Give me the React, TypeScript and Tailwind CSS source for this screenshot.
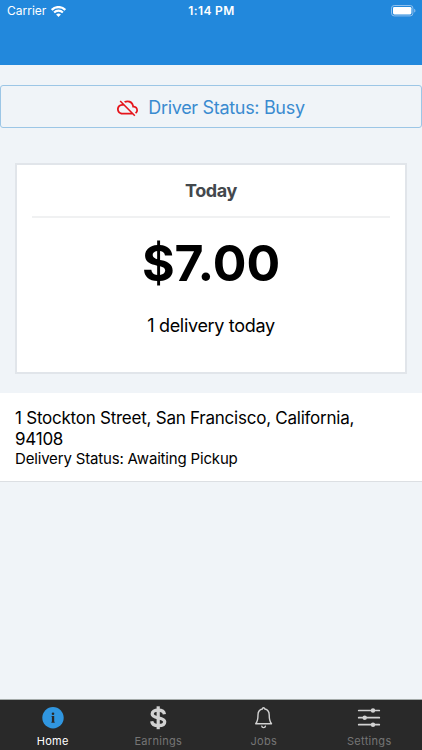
import type { ReactNode } from "react";
import { MdCloudOff } from "react-icons/md";

function WifiIcon() {
  return (
    <svg className="w-[15px] h-[11px]" viewBox="0 0 15 11" fill="none">
      <path d="M0.7 3.9a9.6 9.6 0 0 1 13.6 0" stroke="white" strokeWidth="2.3" />
      <path d="M3.1 6.5a6.2 6.2 0 0 1 8.8 0" stroke="white" strokeWidth="2.1" />
      <path d="M7.5 11L5.1 8.6a3.4 3.4 0 0 1 4.8 0z" fill="white" />
    </svg>
  );
}

function BatteryIcon() {
  return (
    <svg className="w-[25px] h-[12px]" viewBox="0 0 25 12" fill="none">
      <rect x="0.5" y="0.5" width="21.4" height="10.4" rx="2.7" stroke="#8fc0ee" />
      <rect x="2" y="2" width="18.4" height="7.4" rx="1.3" fill="white" />
      <path d="M23.2 3.8v3.8c.7-.3 1.2-1 1.2-1.9s-.5-1.6-1.2-1.9z" fill="#8fc0ee" />
    </svg>
  );
}

function InfoIcon() {
  return (
    <svg className="w-6 h-6" viewBox="0 0 24 24">
      <circle cx="12" cy="11.7" r="10.7" fill="#3096e0" />
      <circle cx="12" cy="7.7" r="1.3" fill="#292929" />
      <path d="M10.6 9.9h2.6v5.8h.5v1h-3.3v-1h.5v-4.8h-.3z" fill="#292929" />
    </svg>
  );
}

function DollarIcon() {
  return (
    <svg className="w-6 h-6" viewBox="0 0 24 24" fill="none" stroke="#d2d2d2">
      <path d="M12.2 .3v22.9" strokeWidth="3.2" />
      <path
        d="M18.4 8.2C18 5.3 15.7 4.2 12.2 4.2c-3.7 0-6 1.4-6 3.8 0 2.3 1.9 3 6 3.8 4.3.8 6.5 1.6 6.5 4 0 2.5-2.5 3.9-6.3 3.9-4 0-6.3-1.3-6.7-4.4"
        strokeWidth="3.3"
      />
    </svg>
  );
}

function BellIcon() {
  return (
    <svg
      className="w-6 h-6"
      viewBox="0 0 24 24"
      fill="none"
      stroke="#d2d2d2"
      strokeWidth="1.4"
      strokeLinecap="round"
      strokeLinejoin="round"
    >
      <path d="M10.4 3a1.2 1.2 0 0 1 2.4 0c2.9.6 4.4 2.7 4.4 5.8 0 5 .6 7 2.3 9H3.7c1.7-2 2.3-4 2.3-9 0-3.1 1.5-5.2 4.4-5.8z" />
      <path d="M9.8 20.1c.1 1 .8 1.5 1.8 1.5s1.7-.5 1.8-1.5" />
    </svg>
  );
}

function SlidersIcon() {
  return (
    <svg className="w-6 h-6" viewBox="0 0 24 24" stroke="#d2d2d2" fill="#d2d2d2">
      <path d="M1.7 4.5h20.6M1.7 11.7h20.6M1.7 18.7h20.6" strokeWidth="1.7" strokeLinecap="round" />
      <g stroke="none">
        <circle cx="16" cy="4.5" r="2.2" />
        <circle cx="7.7" cy="11.7" r="2.2" />
        <circle cx="16" cy="18.7" r="2.2" />
      </g>
    </svg>
  );
}

interface TabProps {
  label: string;
  icon: ReactNode;
  active?: boolean;
}

function Tab({ label, icon, active }: TabProps) {
  return (
    <button type="button" className="flex-1 flex flex-col items-center pt-[6px]">
      {icon}
      <span
        className={
          active
            ? "mt-[4px] text-[11px] leading-[14px] tracking-[0.3px] text-white"
            : "mt-[4px] text-[11px] leading-[14px] tracking-[0.3px] text-[#757575]"
        }
      >
        {label}
      </span>
    </button>
  );
}

export default function App() {
  return (
    <div className="h-[750px] w-[422px] flex flex-col overflow-hidden bg-[#f0f4f8] font-['Inter',sans-serif] text-black">
      <header className="h-[65px] shrink-0 bg-[#2288dc] text-white">
        <div className="grid grid-cols-3 items-center h-[22px] pl-[7px] pr-[6px]">
          <div className="flex items-center gap-[5px]">
            <span className="text-[12px] leading-[22px]">Carrier</span>
            <WifiIcon />
          </div>
          <span className="text-center text-[12px] leading-[22px] tracking-[0.35px] font-semibold">1:14 PM</span>
          <div className="flex justify-end">
            <BatteryIcon />
          </div>
        </div>
      </header>

      <button
        type="button"
        className="mt-[20px] h-[43px] shrink-0 flex items-center justify-center gap-[10px] rounded-[3px] border border-[#9cc6e6] pt-[2px] text-[#3a8bd0]"
      >
        <MdCloudOff className="w-[21px] h-[21px] text-[#e5141b]" />
        <span className="text-[18px] leading-[22px] tracking-[-0.32px]">Driver Status: Busy</span>
      </button>

      <section className="mt-[35px] mx-[15px] h-[211px] shrink-0 border-2 border-[#e1e5ea] bg-white px-[15px] text-center">
        <h2 className="h-[53px] border-b-2 border-[#f0f1f2] pt-[15px] text-[18px] leading-[22px] tracking-[-0.35px] font-bold text-[#43484d]">
          Today
        </h2>
        <p className="mt-[15px] text-[50px] leading-[60px] font-bold">$7.00</p>
        <p className="mt-[22px] text-[18px] leading-[22px] tracking-[-0.32px]">1 delivery today</p>
      </section>

      <section className="mt-[19px] h-[89px] shrink-0 border-b border-[#dcdfe3] bg-white pl-[15px] pt-[15px] pr-[40px]">
        <p className="text-[17px] leading-[21px] tracking-[-0.24px]">
          1 Stockton Street, San Francisco, California, 94108
        </p>
        <p className="text-[15px] leading-[18px] tracking-[-0.17px]">Delivery Status: Awaiting Pickup</p>
      </section>

      <nav className="mt-auto h-[51px] shrink-0 flex border-t border-[#a4aaa9] bg-[#292929]">
        <Tab label="Home" icon={<InfoIcon />} active />
        <Tab label="Earnings" icon={<DollarIcon />} />
        <Tab label="Jobs" icon={<BellIcon />} />
        <Tab label="Settings" icon={<SlidersIcon />} />
      </nav>
    </div>
  );
}
